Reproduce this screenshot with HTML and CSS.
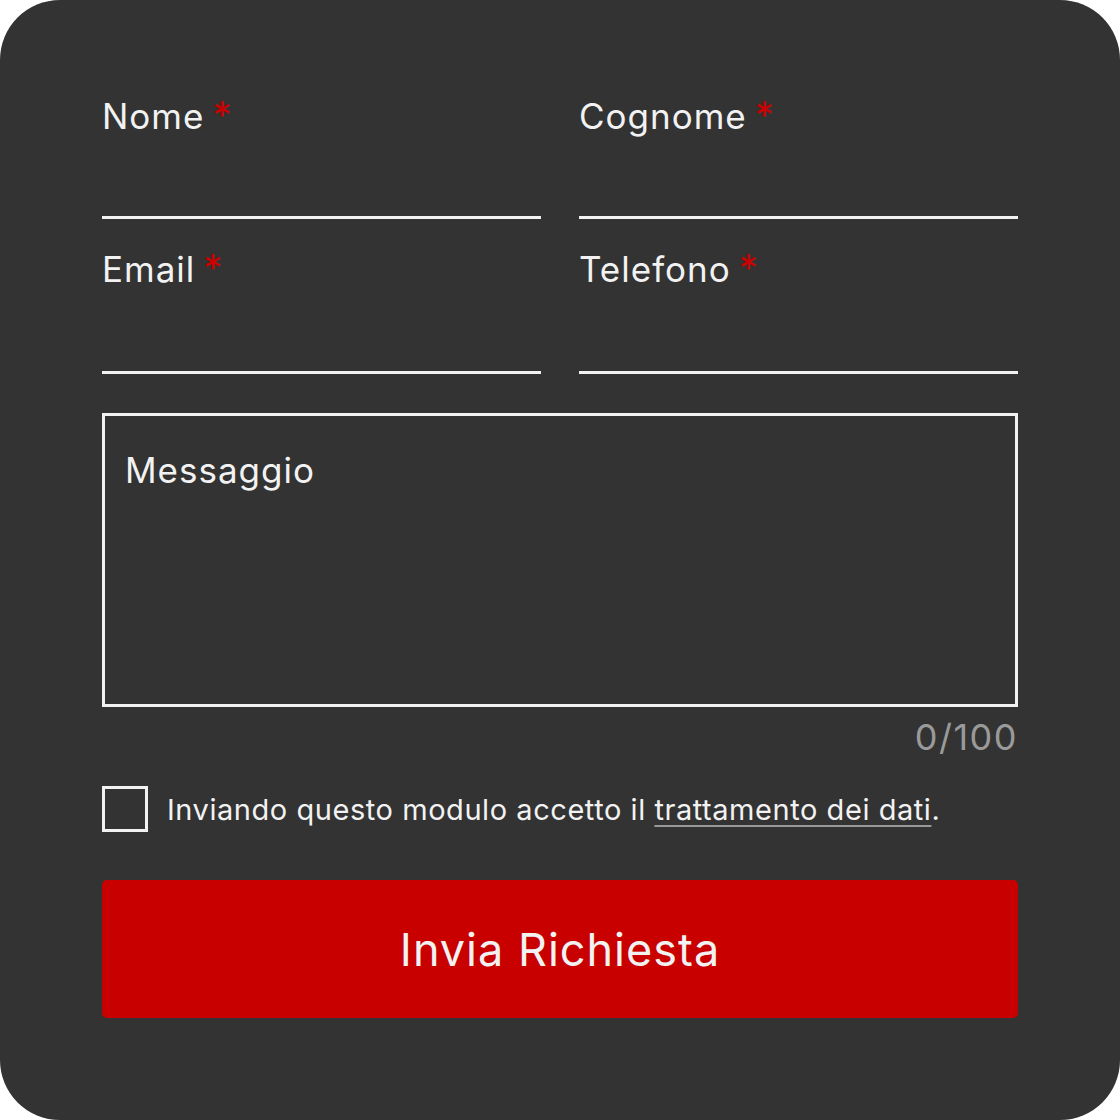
FILE: index.html
```html
<!DOCTYPE html>
<html lang="it">
<head>
    <meta charset="UTF-8">
    <meta name="viewport" content="width=device-width, initial-scale=1.0">
    <title>Contatti</title>
    <link rel="stylesheet" href="styles.css">
</head>
<body>

    <form class="contact-card">
        <div class="fields">
            <label class="field">
                <span class="field-label">Nome<span class="required">*</span></span>
                <input type="text" name="nome">
            </label>
            <label class="field">
                <span class="field-label">Cognome<span class="required">*</span></span>
                <input type="text" name="cognome">
            </label>
            <label class="field">
                <span class="field-label">Email<span class="required">*</span></span>
                <input type="email" name="email">
            </label>
            <label class="field">
                <span class="field-label">Telefono<span class="required">*</span></span>
                <input type="tel" name="telefono">
            </label>
        </div>

        <textarea class="message" name="messaggio" placeholder="Messaggio" maxlength="100"></textarea>
        <div class="counter">0/100</div>

        <label class="consent">
            <input type="checkbox" name="privacy">
            <span>Inviando questo modulo accetto il <a href="#">trattamento dei dati</a>.</span>
        </label>

        <button type="submit" class="submit">Invia Richiesta</button>
    </form>

</body>
</html>
```

FILE: styles.css
```css
body {
    margin: 0;
    background-color: #fff;
    font-family: 'Inter', 'Liberation Sans', sans-serif;
}
.contact-card {
    box-sizing: border-box;
    width: 1120px;
    height: 1120px;
    padding: 94px 102px 0;
    background-color: #333;
    border-radius: 60px;
    color: #f2f2f2;
}
.fields {
    display: grid;
    grid-template-columns: 1fr 1fr;
    column-gap: 38px;
    row-gap: 28px;
}
.field {
    display: flex;
    flex-direction: column;
    min-width: 0;
}
.field-label {
    font-size: 35px;
    line-height: 44px;
    letter-spacing: 1px;
}
.required {
    margin-left: 8px;
    color: #cc0000;
    font-size: 38px;
    line-height: 1;
}
.field input {
    box-sizing: border-box;
    width: 100%;
    min-width: 0;
    height: 81px;
    padding: 0;
    border: none;
    border-bottom: 3px solid #f2f2f2;
    background: transparent;
    color: #f2f2f2;
    font: inherit;
    font-size: 32px;
    outline: none;
}
.field:nth-child(n+3) input {
    height: 83px;
}
.message {
    display: block;
    box-sizing: border-box;
    width: 100%;
    height: 294px;
    margin-top: 39px;
    padding: 32px 20px;
    border: 3px solid #f2f2f2;
    background: transparent;
    color: #f2f2f2;
    font-family: inherit;
    font-size: 35px;
    line-height: 44px;
    letter-spacing: 1px;
    resize: none;
    outline: none;
}
.message::placeholder {
    color: #f2f2f2;
    opacity: 1;
}
.counter {
    margin-top: 8px;
    text-align: right;
    font-size: 36px;
    line-height: 44px;
    letter-spacing: 1.5px;
    color: #9a9a9a;
}
.consent {
    display: flex;
    align-items: center;
    gap: 19px;
    margin-top: 27px;
    font-size: 29px;
    letter-spacing: 0.55px;
}
.consent input {
    appearance: none;
    flex: none;
    width: 46px;
    height: 46px;
    margin: 0;
    border: 3px solid #f2f2f2;
    background: transparent;
    cursor: pointer;
}
.consent a {
    color: #f2f2f2;
    text-decoration: underline;
    text-decoration-color: #999;
    text-underline-offset: 5px;
}
.submit {
    display: block;
    width: 100%;
    height: 138px;
    margin-top: 48px;
    border: none;
    border-radius: 5px;
    background-color: #c80000;
    color: #f2f2f2;
    font-family: inherit;
    font-size: 45px;
    letter-spacing: 1px;
    cursor: pointer;
}
.submit:hover {
    background-color: #b00000;
}
```
